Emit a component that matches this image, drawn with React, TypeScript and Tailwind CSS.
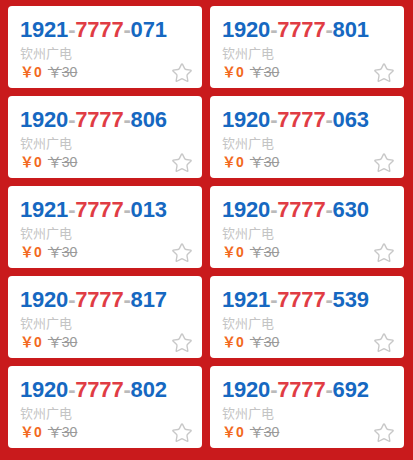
import { Star } from 'lucide-react';

interface NumberItem {
  prefix: string;
  middle: string;
  suffix: string;
}

const numbers: NumberItem[] = [
  { prefix: '1921', middle: '7777', suffix: '071' },
  { prefix: '1920', middle: '7777', suffix: '801' },
  { prefix: '1920', middle: '7777', suffix: '806' },
  { prefix: '1920', middle: '7777', suffix: '063' },
  { prefix: '1921', middle: '7777', suffix: '013' },
  { prefix: '1920', middle: '7777', suffix: '630' },
  { prefix: '1920', middle: '7777', suffix: '817' },
  { prefix: '1921', middle: '7777', suffix: '539' },
  { prefix: '1920', middle: '7777', suffix: '802' },
  { prefix: '1920', middle: '7777', suffix: '692' },
];

function NumberCard({ item }: { item: NumberItem }) {
  return (
    <div className="h-[82px] bg-white rounded-[4px] pl-3 pr-[9px] pt-[11px]">
      <div className="text-[22px] leading-[26px] font-bold tracking-[-0.2px] font-['Liberation_Sans',Arial,sans-serif]">
        <span className="text-[#1668c1]">{item.prefix}</span>
        <span className="text-[#bbbbbb]">-</span>
        <span className="text-[#e03c44]">{item.middle}</span>
        <span className="text-[#bbbbbb]">-</span>
        <span className="text-[#1668c1]">{item.suffix}</span>
      </div>
      <div className="mt-[1px] text-[13px] leading-[18px] text-[#c4c4c4] font-['Noto_Sans_CJK_SC',sans-serif]">
        钦州广电
      </div>
      <div className="flex items-start justify-between">
        <div className="flex items-center gap-[6px] text-[14px] leading-[18px] font-['Liberation_Sans','Noto_Sans_CJK_SC',sans-serif]">
          <span className="text-[#f26a21] font-bold">
            <span className="font-['Noto_Sans_CJK_SC',sans-serif]">￥</span>0
          </span>
          <span className="text-[#9a9a9a] line-through">
            <span className="font-['Noto_Sans_CJK_SC',sans-serif]">￥</span>30
          </span>
        </div>
        <Star size={22} strokeWidth={1.5} className="text-[#c8c8c8]" />
      </div>
    </div>
  );
}

export default function App() {
  return (
    <div className="min-h-screen bg-[#c91a1c] pt-[6px] pl-2 pr-[9px] pb-3">
      <div className="grid grid-cols-2 gap-2">
        {numbers.map((item, i) => (
          <NumberCard key={i} item={item} />
        ))}
      </div>
    </div>
  );
}
